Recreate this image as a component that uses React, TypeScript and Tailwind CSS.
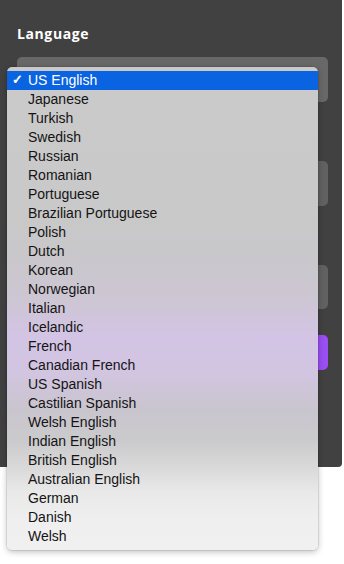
import React from "react";

const items = [
  "US English",
  "Japanese",
  "Turkish",
  "Swedish",
  "Russian",
  "Romanian",
  "Portuguese",
  "Brazilian Portuguese",
  "Polish",
  "Dutch",
  "Korean",
  "Norwegian",
  "Italian",
  "Icelandic",
  "French",
  "Canadian French",
  "US Spanish",
  "Castilian Spanish",
  "Welsh English",
  "Indian English",
  "British English",
  "Australian English",
  "German",
  "Danish",
  "Welsh",
];

export default function App() {
  return (
    <div className="relative w-[344px] h-[564px] bg-white overflow-hidden">
      <div className="w-[342px] h-[467px] bg-[#414141] rounded-br-[4px] px-[17px] pt-[25px] flex flex-col">
        <div
          className="text-white font-bold text-[14px] leading-[18px] h-[18px] tracking-[0.6px]"
          style={{ fontFamily: "'Open Sans', Lato, sans-serif" }}
        >
          Language
        </div>
        <div className="mt-[14px] w-[311px] h-[45px] rounded-[5px] bg-[#686868]" />
        <div className="mt-[59px] w-[311px] h-[45px] rounded-[5px] bg-[#616161]" />
        <div className="mt-[59px] w-[311px] h-[44px] rounded-[5px] bg-[#616161]" />
        <div className="mt-[26px] w-[311px] h-[35px] rounded-[5px] bg-[#9a4ef4]" />
      </div>

      <div
        className="absolute left-[7px] top-[67px] w-[311px] rounded-[5px] py-[4px] shadow-[0_2px_6px_rgba(0,0,0,0.25),0_0_0_0.5px_rgba(0,0,0,0.15)]"
        style={{
          fontFamily: "'Liberation Sans', Arial, sans-serif",
          background:
            "linear-gradient(to bottom, #cacaca 0%, #c9c9c9 30%, #c8c7ca 38%, #cdc6d3 48%, #d3c4e5 56%, #d2c5e1 63%, #c9c5ce 71%, #cacacc 77%, #d9d9d9 83%, #e9e9e9 88%, #efefef 94%, #f0f0f0 100%)",
        }}
      >
        {items.map((it, i) => (
          <div
            key={it}
            className={
              i === 0
                ? "h-[19px] flex items-center bg-[#0a63e0] text-white text-[14px]"
                : "h-[19px] flex items-center text-[#141414] text-[14px]"
            }
          >
            <span className="w-[21px] pl-[5px] pb-[2px] text-[13px] font-bold leading-none">
              {i === 0 ? "✓" : ""}
            </span>
            <span className="leading-none pb-[2px]">{it}</span>
          </div>
        ))}
      </div>
    </div>
  );
}
